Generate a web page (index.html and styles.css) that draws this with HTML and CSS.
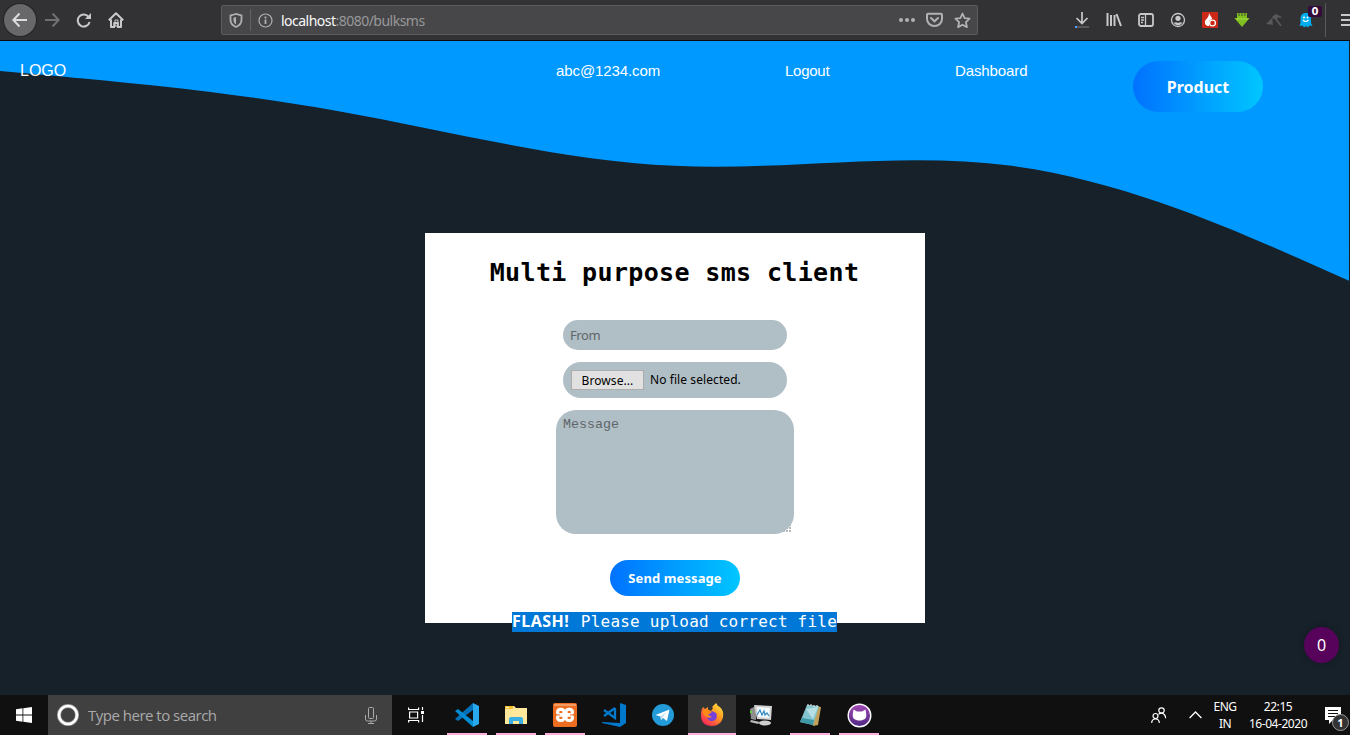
FILE: index.html
```
<!DOCTYPE html>
<html lang="en">
<head>
<meta charset="utf-8">
<title>Bulk SMS</title>
<link rel="stylesheet" href="styles.css">
</head>
<body>
<div class="screen">
  <header class="browser">
    <div class="nav-buttons">
      <span class="back"><svg width="16" height="16" viewBox="0 0 16 16" class="line light"><path d="M15 8H1.500M7.500 1.500L1.300 8l6.200 6.500"/></svg></span>
      <span class="tool"><svg width="16" height="16" viewBox="0 0 16 16" class="line dim"><path d="M1 8h13.500M8.500 1.500L14.700 8l-6.200 6.500"/></svg></span>
      <span class="tool"><svg width="16" height="16" viewBox="0 0 16 16" class="line"><path d="M12.800 5.200A6 6 0 1 0 13.600 10"/><path d="M15 1v6H9z" fill="#c8c8c9" stroke="none"/></svg></span>
      <span class="tool"><svg width="16" height="16" viewBox="0 0 16 16" class="line"><path d="M.8 8.200L8 1.200l7.200 7M3 7.500V15h3.200v-4h3.600v4H13V7.500" stroke-linejoin="round"/><path d="M7 8h3v6H7z" stroke-width="1"/></svg></span>
    </div>
    <div class="address">
      <span class="shield"><svg width="14" height="15" viewBox="0 0 14 15" class="line gray"><path d="M7 1L1.500 2.500V7c0 3 2 5.500 5.500 7 3.500-1.500 5.500-4 5.500-7V2.500z" stroke-width="1.800"/><path d="M7 4L4.500 4.700V7.500c0 1.500 1 3 2.500 4z" fill="#b1b1b3" stroke="none"/></svg></span>
      <span class="info"><svg width="15" height="15" viewBox="0 0 15 15" class="line gray"><circle cx="7.500" cy="7.500" r="6.500" stroke-width="1.200"/><path d="M7.500 3.500v2M7.500 6.500V11" stroke-width="1.800"/></svg></span>
      <span class="url"><b>localhost</b>:8080/bulksms</span>
      <span class="page-actions">
        <svg width="16" height="16" viewBox="0 0 16 16" fill="#b1b1b3"><circle cx="2" cy="8" r="2"/><circle cx="8" cy="8" r="2"/><circle cx="14" cy="8" r="2"/></svg>
        <svg width="17" height="16" viewBox="0 0 17 16" class="line gray"><path d="M2 1.700h13q1 0 1 1V7a7.500 7 0 0 1-15 0V2.700q0-1 1-1z"/><path d="M5 6l3.500 3.300L12 6" stroke-linecap="round"/></svg>
        <svg width="17" height="17" viewBox="0 0 17 17" class="line gray"><path d="M8.500 1.500l2.100 4.600 5 .6-3.700 3.500 1 5-4.400-2.500-4.400 2.500 1-5L1.400 6.700l5-.6z" stroke-width="1.800" stroke-linejoin="round"/></svg>
      </span>
    </div>
    <div class="extensions">
      <span><svg width="16" height="18" viewBox="0 0 16 18" class="line"><path d="M8 1v11M2.500 7L8 12.500 13.500 7" stroke-width="1.700"/><path d="M1 16h14" stroke="#57575a"/><path d="M1 16h2" stroke="#45a1ff"/></svg></span>
      <span><svg width="16" height="16" viewBox="0 0 16 16" class="line"><path d="M1.500 1v13M5 3v11M8.500 3v11M10.500 2l4.500 12"/></svg></span>
      <span><svg width="16" height="16" viewBox="0 0 16 16" class="line"><rect x="1" y="2" width="14" height="12" rx="2" stroke-width="1.800"/><path d="M7.500 2v12M3 5.500h3M3 8h3M3 10.500h2" stroke-width="1.300"/></svg></span>
      <span><svg width="16" height="16" viewBox="0 0 16 16" class="line"><circle cx="8" cy="8" r="6.500" stroke-width="1.300"/><circle cx="8" cy="6.300" r="2.600" fill="#c8c8c9" stroke="none"/><path d="M3.500 10q1.500 1 2.700.2 1.800 1 3.600 0 1.200.8 2.700-.2-1.300 3.200-4.500 3.200T3.500 10z" fill="#c8c8c9" stroke="none"/></svg></span>
      <span><svg width="16" height="16" viewBox="0 0 16 16"><rect width="16" height="16" rx="1" fill="#cc2818"/><path d="M7 1c1 3 3 3.500 3 6L7 9v5C4 14 2.500 12 3 9.500 3.500 7 7 6 7 1z" fill="#fff"/><circle cx="10.500" cy="11" r="2.900" fill="#cc2818" stroke="#fff" stroke-width="1.300"/></svg></span>
      <span><svg width="16" height="16" viewBox="0 0 16 16"><path d="M3 1v5H.3L8 15l7.700-9H13V1z" fill="#7fbf1f"/><path d="M5 0v4M8 0v4M11 0v4" stroke="#343436" stroke-width=".8"/><path d="M2 7h12" stroke="#a8dc48"/></svg></span>
      <span><svg width="16" height="16" viewBox="0 0 16 16" fill="#58585a"><path d="M0 12l6-6 1 7zM6 5l4-3 6 3-2 1-2-1-1 2 5 7h-2L8 6 7 8z"/></svg></span>
      <span class="ghost"><svg width="14" height="16" viewBox="0 0 14 16"><path d="M1.500 7C1.500 3 3.500 1 7 1s5 2 5 6v4l1.500 3-3-.5L9 15.500 7 14l-2 1.500-1.500-2-3 .5 1-3z" fill="#00aef0"/><circle cx="5" cy="5.500" r="1" fill="#fff"/><circle cx="8.500" cy="5.500" r="1" fill="#fff"/><path d="M4 8q2.700 3 5.500 0" fill="none" stroke="#fff" stroke-width="1.200"/></svg><i class="badge">0</i></span>
      <span class="menu"><svg width="16" height="16" viewBox="0 0 16 16" class="line"><path d="M0 3h15M0 8h15M0 13h15"/></svg></span>
    </div>
  </header>

  <main class="page">
    <svg class="wave" viewBox="0 0 1440 320"><path fill="#0099ff" d="M0,32L60,37.300C120,43,240,53,360,74.700C480,96,600,128,720,133.300C840,139,960,117,1080,133.300C1200,149,1320,203,1380,229.300L1440,256V0H0Z"/></svg>
    <nav class="site-nav">
      <a class="logo">LOGO</a>
      <a class="mail">abc@1234.com</a>
      <a class="logout">Logout</a>
      <a class="dash">Dashboard</a>
      <button class="pill product">Product</button>
    </nav>
    <section class="card">
      <h1>Multi purpose sms client</h1>
      <div class="field from">From</div>
      <div class="field file"><span class="browse">Browse...</span><span>No file selected.</span></div>
      <div class="message-box">
        <div class="field message">Message</div>
        <svg class="grip" width="9" height="9" viewBox="0 0 9 9"><path d="M7 0v2M7 3v2M4 3v2M7 6v2M4 6v2M1 6v2" stroke="#b9b9b9" stroke-width="2"/></svg>
      </div>
      <button class="pill send">Send message</button>
      <p class="flash"><b>FLASH!</b><span> Please upload correct file</span></p>
    </section>
    <span class="counter">0</span>
  </main>

  <footer class="taskbar">
    <span class="task"><svg width="16" height="16" viewBox="0 0 16 16" fill="#fff"><path d="M0 2.200l6.500-.9v6.300H0zM7.300 1.200L16 0v7.600H7.300zM0 8.400h6.500v6.300L0 13.800zM7.300 8.400H16V16l-8.700-1.200z"/></svg></span>
    <div class="search">
      <svg width="22" height="22" viewBox="0 0 22 22"><circle cx="11" cy="11" r="9" fill="none" stroke="#999" stroke-width="4"/><circle cx="11" cy="11" r="9" fill="none" stroke="#fff" stroke-width="2.600"/></svg>
      <span>Type here to search</span>
      <svg width="12" height="17" viewBox="0 0 12 17" fill="none" stroke="#aaa"><rect x="3.500" y=".5" width="5" height="11" rx="1"/><path d="M.5 8v4q0 2 2 2h7q2 0 2-2V8M6 14v2.500M3 16.500h6"/></svg>
    </div>
    <span class="task"><svg width="18" height="18" viewBox="0 0 18 18" fill="none" stroke="#fff" stroke-width="1.200"><path d="M1.600 1.500v2h10v-2M1.600 16.500v-2h10v2M2.600 6h8v6h-8zM15.500 1v3M15.500 9v7"/><path d="M14 5h3v3h-3z" fill="#fff" stroke="none"/></svg></span>
    <div class="apps">
      <span class="task open"><svg width="24" height="24" viewBox="0 0 24 24"><path d="M18 0v7L3 18l-3-2z" fill="#0071b8"/><path d="M0 8l3-2 15 12v6z" fill="#008bd2"/><path d="M18 0l6 3v18l-6 3z" fill="#29a8ee"/></svg></span>
      <span class="task open"><svg width="22" height="19" viewBox="0 0 22 19"><path d="M0 0h9l2 2h11v16H0z" fill="#ffe79c"/><path d="M0 0h8v3H0z" fill="#f4bf2f"/><path d="M1 1h3v1H1z" fill="#fff5cb"/><path d="M4 18v-5q0-2 2-2h10q2 0 2 2v5h-4v-3H8v3z" fill="#3aafe3"/></svg></span>
      <span class="task open"><svg width="24" height="24" viewBox="0 0 24 24"><rect width="24" height="24" rx="2" fill="#ed6e20"/><path d="M1 1h22v2H1z" fill="#f49b62"/><g fill="none" stroke="#fff" stroke-width="3.200"><rect x="4.600" y="6.300" width="6.400" height="5.600" rx="2.600"/><rect x="13" y="6.300" width="6.400" height="5.600" rx="2.600"/><rect x="4.600" y="11.900" width="6.400" height="5.600" rx="2.600"/><rect x="13" y="11.900" width="6.400" height="5.600" rx="2.600"/></g><path d="M10 9.500h4v5h-4z" fill="#fff"/><path d="M2 11.900h5M17 11.900h5" stroke="#ed6e20" stroke-width="1"/></svg></span>
      <span class="task"><svg width="24" height="24" viewBox="0 0 24 24"><path d="M18 0l6 2v18l-6 4-18-4v-1l18 1z" fill="#0078cc"/><path d="M13 5v10L2 7M13 5L2 13" fill="none" stroke="#0078cc" stroke-width="2.300"/></svg></span>
      <span class="task"><svg width="22" height="22" viewBox="0 0 22 22"><circle cx="11" cy="11" r="11" fill="#239bd8"/><path d="M3.500 11L17.500 5.500 15 17l-4-3-2 2-.5-3.500z" fill="#fff"/><path d="M8.500 12.500L15 8l-5 5.500-1 2.500z" fill="#b9d8eb"/></svg></span>
      <span class="task active"><svg width="24" height="24" viewBox="0 0 24 24"><defs><linearGradient id="fx" x1="1" y1="0" x2=".2" y2="1"><stop offset="0" stop-color="#fff24a"/><stop offset=".45" stop-color="#ff9a1f"/><stop offset="1" stop-color="#fa205c"/></linearGradient></defs><path d="M3 4l2 2 3-2v3l3 1 2-3-1-1 4-4 2 3c4 2 6 6 5 11-1 6-6 9-11 9C5 23 1 19 1 13c0-3 0-6 2-9z" fill="url(#fx)"/><path d="M8 9l4-1 4 2c2 4 0 8-4 8-3 0-5-2-5-5z" fill="#7540dc"/><path d="M3 7c4-2 7 0 9 2l-4 3 4 2c-4 2-8-1-9-4z" fill="#ff8b16"/></svg></span>
      <span class="task"><svg width="24" height="22" viewBox="0 0 24 22"><path d="M1 5l6-3v14l-5-1z" fill="#8f8f8f"/><path d="M1 7h2v2H1z" fill="#5bdc2a"/><path d="M5 1l18 1-1 14-14-1z" fill="#d2d2d2"/><path d="M8 3l13 1-1 10-11-1z" fill="#f4fbff"/><path d="M8 11l3-5 2 5 2-4 1 4 2-2 2 3" fill="none" stroke="#3288c0" stroke-width="1.200"/><path d="M2 16l9 2-2 2-8-2z" fill="#bbb"/><ellipse cx="16" cy="19" rx="6" ry="2.500" fill="#cfcfcf"/></svg></span>
      <span class="task open"><svg width="23" height="23" viewBox="0 0 23 23"><path d="M8 1l14 2-3 18-5 1z" fill="#c2a15b"/><path d="M8 1l12 1-6 19-13-3z" fill="#83c5ce"/><path d="M7 5l12-2-5 12z" fill="#b5dfe4"/><path d="M3 14l12 2-1 5-13-3z" fill="#3f98a6"/><path d="M9 0v2M12 0v2M15 1v2M18 1v2" stroke="#eee"/></svg></span>
      <span class="task open"><svg width="25" height="25" viewBox="0 0 25 25"><defs><linearGradient id="gh" x2="0" y2="1"><stop stop-color="#a44bb5"/><stop offset="1" stop-color="#4d2783"/></linearGradient></defs><circle cx="12.500" cy="12.500" r="11.300" fill="url(#gh)" stroke="#fff" stroke-width="1.400"/><path d="M6.500 6.500l3.500 2h5l3.500-2 .6 4c1 5-2 7-6.600 7s-7.600-2-6.600-7z" fill="#fff"/></svg></span>
    </div>
    <div class="tray">
      <svg width="16" height="17" viewBox="0 0 16 17" fill="none" stroke="#fff" stroke-width="1.200"><circle cx="10.500" cy="3.500" r="2.700"/><circle cx="4.500" cy="9" r="2.500"/><path d="M.7 16q0-4 3.800-4t3.800 4M7.500 7.200q3-2 5.500 0 1.500 1.300 1.700 4"/></svg>
      <svg width="13" height="8" viewBox="0 0 13 8" fill="none" stroke="#fff" stroke-width="1.300"><path d="M.6 7l5.900-6 5.900 6"/></svg>
      <span class="lang">ENG<br>IN</span>
      <span class="clock">22:15<br>16-04-2020</span>
      <span class="notice"><svg width="16" height="17" viewBox="0 0 16 17"><path d="M0 0h16v13H8l-4 4v-4H0z" fill="#fff"/><path d="M3 3.500h10M3 6.500h10M3 9.500h7" stroke="#111" stroke-width="1.100"/></svg><i class="notice-count">1</i></span>
    </div>
  </footer>
</div>
</body>
</html>
```
FILE: styles.css
```
* { box-sizing: border-box; }
body { margin: 0; background: #17202a; }
svg { display: block; flex: none; }
i { font-style: normal; }
.screen { width: 1350px; height: 735px; overflow: hidden; display: flex; flex-direction: column; }

.browser { height: 41px; flex: none; display: flex; align-items: center; background: #323234; border-bottom: 1px solid #0c0c0d; overflow: hidden; }
.line { fill: none; stroke: #c8c8c9; stroke-width: 2; }
.line.light { stroke: #ddd; }
.line.dim { stroke: #707072; }
.line.gray { stroke: #b1b1b3; }
.nav-buttons { display: flex; flex: none; width: 221px; padding-left: 4px; align-items: center; }
.back { width: 32px; height: 32px; flex: none; border-radius: 50%; background: #68686a; display: flex; align-items: center; justify-content: center; box-shadow: 0 0 0 1px #242426; }
.tool { width: 32px; display: flex; justify-content: center; }
.address { width: 757px; flex: none; height: 30px; display: flex; align-items: center; background: #474749; border: 1px solid #5c5c5e; border-radius: 2px; padding: 0 6px 0 7px; }
.shield { height: 22px; width: 22px; border-right: 1px solid #626264; display: flex; align-items: center; }
.info { margin-left: 7px; }
.url { margin-left: 8px; font: 14px "Noto Sans", sans-serif; letter-spacing: -.52px; color: #98989a; padding-top: 1px; }
.url b { font-weight: normal; color: #f9f9fa; }
.page-actions { display: flex; align-items: center; gap: 11px; margin-left: auto; }
.extensions { display: flex; flex: none; align-items: center; margin-left: 88px; height: 40px; }
.extensions span { width: 32px; flex: none; display: flex; justify-content: center; }
.ghost { position: relative; }
.badge { position: absolute; left: 18px; top: -6px; width: 14px; height: 11px; border-radius: 2px; background: #340b39; color: #fff; font: bold 10px/11px "DejaVu Sans", sans-serif; text-align: center; }
.extensions .menu { height: 34px; margin-left: 3px; padding-left: 15px; border-left: 1px solid #5a5a5c; align-items: center; justify-content: flex-start; }

.page { position: relative; width: 1349px; height: 654px; flex: none; background: #17212a; }
.wave { position: absolute; left: 0; top: 0; width: 1349px; }
.site-nav { position: relative; height: 192px; padding: 20px 0 0 20px; display: flex; align-items: flex-start; font: 15px/20px "Liberation Sans", Arial, sans-serif; letter-spacing: -.1px; color: #fff; }
.logo { width: 536px; font-size: 16px; letter-spacing: 0; }
.mail { width: 229px; }
.logout { width: 170px; letter-spacing: -.25px; }
.dash { width: 178px; }
.pill { border: 0; padding: 0; color: #fff; background: linear-gradient(to right, #0072ff, #00c6ff); width: 130px; font-family: "Noto Sans", sans-serif; font-weight: bold; }
.product { height: 51px; border-radius: 26px; font-size: 16px; letter-spacing: 0; }
.card { width: 500px; height: 390px; margin-left: 425px; background: #fff; display: flex; flex-direction: column; align-items: center; }
.card h1 { flex: none; margin: 25px 0 0; padding-right: 1px; height: 62px; font: bold 25px/30px "DejaVu Sans Mono", monospace; letter-spacing: .35px; white-space: nowrap; color: #000; }
.field { flex: none; background: #b0bec5; font: 13px/16px "Noto Sans", sans-serif; }
.from { width: 224px; height: 30px; border-radius: 15px; padding: 7px; color: #5f666a; letter-spacing: -.4px; }
.file { width: 224px; height: 36px; margin-top: 12px; border-radius: 18px; display: flex; align-items: center; gap: 6px; padding-left: 8px; font-size: 12px; letter-spacing: .08px; color: #000; }
.browse { width: 73px; height: 20px; border: 1px solid #adadad; background: #e1e1e1; text-align: center; line-height: 19px; }
.message-box { position: relative; flex: none; margin-top: 12px; }
.message { position: relative; z-index: 1; width: 238px; height: 124px; border-radius: 20px; padding: 7px; color: #5f666a; font: 13.330px/16px "Liberation Mono", monospace; }
.grip { position: absolute; right: 2px; bottom: 1px; }
.send { flex: none; height: 36px; margin-top: 26px; border-radius: 18px; font-size: 13px; letter-spacing: .1px; }
.flash { margin: 16px 1px 0 0; flex: none; width: 325px; height: 20px; background: #0078d7; color: #fff; font: 16px/19px "DejaVu Sans Mono", monospace; white-space: pre; display: flex; }
.flash b { font: bold 16px/19px "Noto Sans", sans-serif; width: 59px; letter-spacing: .5px; }
.flash span { letter-spacing: .22px; }
.counter { position: absolute; left: 1304px; top: 586px; width: 35px; height: 36px; border-radius: 50%; background: #57025b; color: #fff; font: 16px/36px "Noto Sans", sans-serif; text-align: center; box-shadow: 0 0 7px rgba(0,0,0,.25); }

.taskbar { height: 40px; flex: none; display: flex; background: #101010; color: #fff; }
.task { width: 48px; height: 40px; flex: none; display: flex; align-items: center; justify-content: center; }
.search { width: 344px; background: #404040; display: flex; align-items: center; padding: 0 15px 0 9px; gap: 9px; font: 15px "Open Sans", sans-serif; letter-spacing: -.5px; color: #aaa; }
.search svg:last-child { margin-left: auto; }
.apps { display: flex; gap: 1px; margin-left: 3px; }
.open { background: linear-gradient(#ffb0dc, #ffb0dc) center bottom / 40px 2px no-repeat; }
.active { background: #333; border-bottom: 2px solid #ffb0dc; padding-top: 2px; }
.tray { margin-left: auto; display: flex; align-items: center; font: 12px/17px "Noto Sans", sans-serif; text-align: center; padding-right: 9px; }
.tray > svg + svg { margin-left: 22px; }
.lang { width: 34px; margin-left: 6px; letter-spacing: -.5px; }
.clock { width: 70px; margin-left: 1px; letter-spacing: -.45px; }
.notice { position: relative; margin-left: 12px; }
.notice-count { position: absolute; left: 7px; top: 7px; width: 17px; height: 17px; border-radius: 50%; border: 1px solid #999; background: #333; color: #fff; font: bold 11px/15px "Noto Sans", sans-serif; }
```
